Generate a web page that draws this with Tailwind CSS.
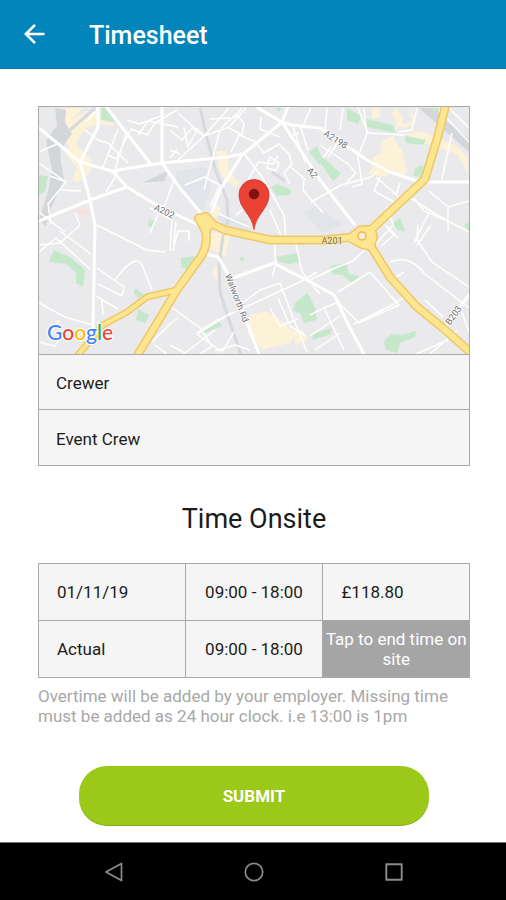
<!DOCTYPE html>
<html lang="en">
<head>
<meta charset="utf-8">
<meta name="viewport" content="width=device-width, initial-scale=1">
<title>Timesheet</title>
<script src="https://cdn.jsdelivr.net/npm/@tailwindcss/browser@4"></script>
</head>
<body class="flex min-h-screen flex-col bg-white font-['Roboto',sans-serif] text-[17px] leading-5 text-[#1c1c1c]">
<header class="flex h-[69px] items-center gap-11 border-b border-[#0577a8] bg-[#0285ba] px-6 pt-1 text-white">
  <button type="button" aria-label="Back" class="-mt-1 block">
    <svg class="block h-6 w-[21px]" viewBox="0 0 21 24" fill="none" stroke="currentColor" stroke-width="2.6"><path d="M20.5 12H2.5M11 2.8L1.8 12l9.2 9.2"/></svg>
  </button>
  <h1 class="text-[25px] leading-8 font-medium">Timesheet</h1>
</header>

<main class="flex grow flex-col pt-[37px] pr-9 pl-[38px]">
  <section class="border border-[#a9a9a9] bg-[#f5f5f5]">
    <svg class="block h-auto w-full" viewBox="39 107 430 247" role="img" aria-label="Map of the work location">
      <rect x="39" y="107" width="430" height="247" fill="#eae9ec"/>
      <!-- built-up zones -->
      <g fill="#fbf2d8">
        <path d="M66 108h17l-18 20-8-6zM60 132l12-12 14-9 12 2 5 8 11 2-1 3-13-2-12 3-8 8-3 10 6 7 9 8-2 13-13 10-5-4 5-12-11-12 3-9z"/>
        <path d="M216 151h11l2 20 11 12-5 4-11-8-5-10zM212 209l7-4 2 9-9 6zM208 233h23l-6 24-18-10z"/>
        <path d="M395 108l8 8-1 8 10-3-3-8 4 0 0 10-5 4-11 0-3 12 8 12 5 20-5 4-12-3-4 5-18-3 6-10-2-6 9-6 0-10 12-6 4-14-6-8zM372 108h8v9l-8 2zM404 133l21-1 13 7 18 6 12 13v16l-10-19-18-7-20-6z"/>
        <path d="M250 315l16-4 14 9 16 13-6 10-28 7-7-9-7-8zM292 332l10-3 6 10-12 6zM213 268l6-2v16l-6-5z"/>
      </g>
      <!-- water, rail land and campuses -->
      <g fill="#e1e5e9">
        <path d="M176 171l30-4 5 22-8 22-14-10-13-21zM218 215l30 6 5 16-30-9zM303 212l13-6 28 18-22 9z"/>
      </g>
      <g fill="#d3d7da">
        <path d="M55 108l11 2-1 12 7 12-12 16 1 12 3 18-13 28-5 18-7-6 9-29 4-22-6-28 11-16z"/>
        <path d="M142 183l26-12-4 10zM419 108l50 44v-13l-38-31z"/>
      </g>
      <g fill="none" stroke="#d7dadd">
        <path d="M200 108l7 30 8 30 12 32 1 20-5 16-4 30 1 26 8 25 13 38" stroke-width="3"/>
        <path d="M70 130L95 108M272 172l13 9" stroke-width="3"/>
      </g>
      <!-- parks -->
      <g fill="#c5e7ca">
        <path d="M102 108h8l6 14-15-2zM39 175l9 1-3 16-6 3zM149 219l6 2-1 7-6-2zM54 250l8 8-7 5-6-2zM55 251l15 6 15 13-2 17-7-4 0-10-9-9-17-2zM135 288l9 7-6 3-4-5zM138 309l11 6-3 8-10-3z"/>
        <path d="M181 258l14-2-6 14-8-3zM271 188l5-4 9 3 7 3-3 5-12 1zM309 152l8-6 3 8 0 11zM275 108h7l-3 4zM276 257l22-4 2 9-10 2-11-2zM202 331l17-9 3 4-17 7z"/>
        <path d="M313 148l28 26-8 7-18-26zM347 108l14 8-3 8-11-4zM366 119l27 6 3 8-30-6zM405 136l21 4-3 5-17-2zM415 168l8-3 1 13-10-2zM430 108h9v7zM330 266l16-3 3 11 10 2-6 7-11-8-10-1zM295 303l12-10 3 4 5 14 1 9-12 3-4-10-7-2zM310 297l5 11 2 11-7 3zM312 334l20-6-1 6-18 6zM384 341l7-7 12 1 13-4-1 6-15 6-3 10-11-3zM392 224l8-6 5 14-8-3zM464 224l5-1v9z"/>
        <circle cx="242" cy="259" r="2"/>
      </g>
      <path d="M75 211l10-3 5 5-9 3z" fill="#f8e0e0"/>
      <!-- small streets -->
      <g fill="none" stroke="#fff" stroke-width="1.5" stroke-linejoin="round">
        <path d="M39 152l18-8M39 163l27 19-18 22 3 20M50 176l14 5M60 190l21 1M85 130l13 10 10 3 20 20M118 129l-15 38M126 134l-10 32 1 8-11 18M108 155l8 4 15-30 16 6 8-12 22-13M127 120l12 4 22-8M138 135l10-14 30 6M170 150l10 4M170 158l7-9M162 205l-12 28M174 180l-12 33M150 208l22 12M75 213l5 12-20 18-20 2"/>
        <path d="M39 252l17-14 35 32M60 231l31 23M99 108l-13 14M65 232l-26-20M97 225l50 25 18 2M172 219l-2 32M176 222l-3 29M97 268l27 19-2 9-24-12M115 280q23-32 29-10l8 20M96 296l22 13M102 300l1 15M39 303l26 14 28 8M59 320l-10 17M39 342l16 4 5-8M170 306l30 22 12 18-12 8M152 342l18-18 8-6M155 345l12 9M173 250l5-19h11v10"/>
        <path d="M170 130l12 10 10-12 12 8-27 25M184 127l4 20 10-19M178 113l26 23 25-28M204 136l25-9 17-19M209 119l25-1 8-10M221 128l15-14 8 9-2 12-15-8M220 130l-16 60M245 155l17 22 22 38 2 23M231 152l8-17 15 6 10 12 15-9 10 10 3 10-8 9 6 11M248 180l10-18 15 2 5-8M270 157l9 6-3 8-9-3zM210 207l10-22-15-8-20 8M219 214l30 13M236 215l15-12M288 165l18 15M270 210l13 30M261 117l-1 12 20 8M293 127l12 35M300 125l8 25M289 136l10-3M304 179l-1 11 20 23"/>
        <path d="M311 108l-8 18M327 108l-2 22 15 9-12 18M340 130l3-22M358 108l10 25 37 2M364 108l3 25-9 24 4 27-10 3M320 145l27 18 9 10-10 10M331 147l-8 11M311 202l30-17 30-8 7-6M398 132l14-2 5-22M380 177l-6 14 20 11M376 177l24 21M400 183l-4 12M452 133l-10 46M429 191l19 16 21-6M448 207v24M407 196l37 23 25 13M414 198l10 13 24 10M430 211l-16 32M388 230l10 8M387 207l7 20M449 108l20 20M439 110l30 32"/>
        <path d="M274 240l2 24-4 13M295 240l7 32 18 22M276 264l30 15M240 305l20-15 20-7 13 35 14 34M222 318l82-38 13-8M270 308l10 18 18-7M278 298l12 28 15 9M231 313l-34 21 25 18 12-20M197 333l22-14M170 345l15 8 30-23M215 351l20-6 15 5"/>
        <path d="M310 280l25-12 18-7 18-17M338 292l32-20 29 33-40 18-24-24M310 315l14-7 12-5M325 310l19 40M310 336l30-20M315 350l25-17M354 324l40-20 12-8M388 282l16-10M390 262q20-8 35 12l44 34M392 226l-23 26M385 225l10 9-14 12M418 225l-1 15 15 22 37 25M431 225l-14 20M425 300l18 17M448 340l-32 14M458 330l-28 24M461 310l8 22"/>
      </g>
      <!-- main white roads -->
      <g fill="none" stroke="#fff" stroke-width="3" stroke-linecap="round" stroke-linejoin="round">
        <path d="M39 128l41 34 32 9 15 16 26 16 45 22M98 108v19l-18 35 10 38 5 25-2 102M107 108l43 55M162 108v55l18 25 20 24M112 171l50-8 66-6 14-3M39 221l51-21 37-13M212 212l8-22 22-35 40-33 6-15M258 108l24 14 38 58 34 44M282 122l10 3 28 3 47 32 23 12 30 10h49M205 254l13 3 9 15 15 38 17 44M233 278l41-15 18 10 17 8 25 14 17 35 13 24M469 295l-24 32"/>
      </g>
      <!-- trunk roads -->
      <g fill="none" stroke-linecap="round" stroke-linejoin="round">
        <g stroke="#f0c766">
          <path d="M203 220q9 25-6 42l-20 28-40 66M203 220l22 10 45 10h55l37-4 12-9 51-48 13-43 8-32M362 237l8 8 20 32 27 30 26 21 26 23" stroke-width="9"/>
          <path d="M177 290l-30 7-20 15-24 13-25 30" stroke-width="7"/>
          <path d="M198 218l8-2 7 7-8 8zM349 238l12-9h11l2 8-3 10-9-2z" stroke-width="8"/>
        </g>
        <g stroke="#fde68f" fill="none">
          <path d="M198 218l8-2 7 7-8 8zM349 238l12-9h11l2 8-3 10-9-2z" fill="#fde68f" stroke-width="5"/>
          <path d="M203 220q9 25-6 42l-20 28-40 66M203 220l22 10 45 10h55l37-4 12-9 51-48 13-43 8-32M362 237l8 8 20 32 27 30 26 21 26 23" stroke-width="6"/>
          <path d="M177 290l-30 7-20 15-24 13-25 30" stroke-width="4"/>
        </g>
        <circle cx="362" cy="236" r="4" fill="#f5eedc" stroke="#e9b84f" stroke-width="1.5"/>
      </g>
      <!-- road names -->
      <g font-family="Roboto, sans-serif" font-size="9" fill="#6d6d70" stroke="#fff" stroke-width="1.5" paint-order="stroke" text-anchor="middle">
        <text transform="translate(163 214) rotate(26)">A202</text>
        <text transform="translate(334 142) rotate(32)">A2198</text>
        <text transform="translate(310 175) rotate(50)">A2</text>
        <text x="332" y="244" stroke="#fde68f">A201</text>
        <text transform="translate(456 317) rotate(-55)">B203</text>
        <text transform="translate(234 299) rotate(69)">Walworth Rd</text>
      </g>
      <path d="M254 229.500C252 214 239 209 239 194.500a15 15 0 0 1 30 0C269 209 256 214 254 229.500z" fill="#ea4335" stroke="#c93a2d" stroke-width=".8"/>
      <circle cx="254" cy="194" r="5.300" fill="#811411"/>
      <text x="47" y="340" font-family="Lato, sans-serif" font-size="21" font-weight="500" stroke="#fff" stroke-width="2" paint-order="stroke"><tspan fill="#4285f4">G</tspan><tspan fill="#ea4335">o</tspan><tspan fill="#fbbc05">o</tspan><tspan fill="#4285f4">g</tspan><tspan fill="#34a853">l</tspan><tspan fill="#ea4335">e</tspan></text>
    </svg>
    <p class="border-t border-[#a9a9a9] px-[17px] pt-[19px] pb-[17px] leading-[18px]">Crewer</p>
    <p class="border-t border-[#a9a9a9] px-[17px] pt-5 pb-[17px] leading-[18px]">Event Crew</p>
  </section>

  <h2 class="mt-[35px] text-center text-[27px] leading-9">Time Onsite</h2>

  <table class="mt-[26px] w-full table-fixed border-collapse bg-[#f5f5f5]">
    <colgroup><col class="w-[34%]"><col class="w-[32%]"><col class="w-[34%]"></colgroup>
    <tbody>
      <tr class="h-[57px]">
        <td class="border border-[#a9a9a9] px-[18px]">01/11/19</td>
        <td class="border border-[#a9a9a9] text-center">09:00 - 18:00</td>
        <td class="border border-[#a9a9a9] px-[18px]">£118.80</td>
      </tr>
      <tr class="h-[57px]">
        <td class="border border-[#a9a9a9] px-[18px]">Actual</td>
        <td class="border border-[#a9a9a9] text-center">09:00 - 18:00</td>
        <td class="border border-[#a9a9a9] bg-[#a5a5a5] p-0"><button type="button" class="block h-14 w-full text-center text-white">Tap to end time on site</button></td>
      </tr>
    </tbody>
  </table>
  <p class="mt-2 text-[#a8a8a8]">Overtime will be added by your employer. Missing time must be added as 24 hour clock. i.e 13:00 is 1pm</p>

  <button type="button" class="mx-[41px] mt-10 mb-[15px] h-[60px] rounded-[28px] border-b border-[#86a818] bg-[#9cc81a] font-bold text-white">SUBMIT</button>
</main>

<nav aria-label="System" class="flex h-[58px] items-center justify-center gap-[120px] border-t border-[#777] bg-black pl-px text-[#8c8c8c]">
  <button type="button" aria-label="Back"><svg class="block size-5" viewBox="0 0 20 20" fill="none" stroke="currentColor" stroke-width="1.700" stroke-linejoin="round"><path d="M17.500 1.500v17L2 10z"/></svg></button>
  <button type="button" aria-label="Home"><svg class="block size-5" viewBox="0 0 20 20" fill="none" stroke="currentColor" stroke-width="1.700"><circle cx="10" cy="10" r="8.700"/></svg></button>
  <button type="button" aria-label="Recent apps"><svg class="block size-5" viewBox="0 0 20 20" fill="none" stroke="currentColor" stroke-width="1.900" stroke-linejoin="round"><path d="M2.300 2.300h15.400v15.400H2.300z"/></svg></button>
</nav>
</body>
</html>
